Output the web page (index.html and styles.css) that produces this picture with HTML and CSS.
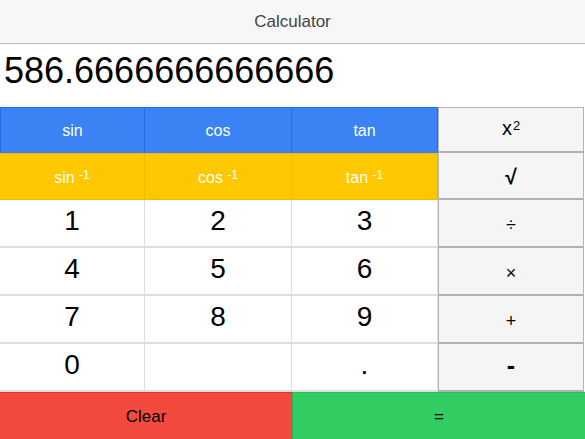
FILE: index.html
```html
<!DOCTYPE html>
<html>
<head>
<meta charset="utf-8">
<link rel="stylesheet" href="styles.css">
</head>
<body>
<div class="app">
  <header class="title">Calculator</header>
  <div class="display">586.6666666666666</div>
  <div class="keys">
    <div class="key trig">sin</div>
    <div class="key trig">cos</div>
    <div class="key trig">tan</div>
    <div class="key op op-sq">x<sup>2</sup></div>

    <div class="key inv">sin&nbsp;<sup>-1</sup></div>
    <div class="key inv">cos&nbsp;<sup>-1</sup></div>
    <div class="key inv">tan&nbsp;<sup>-1</sup></div>
    <div class="key op op-sqrt">√</div>

    <div class="key num">1</div>
    <div class="key num">2</div>
    <div class="key num">3</div>
    <div class="key op op-small">÷</div>

    <div class="key num">4</div>
    <div class="key num">5</div>
    <div class="key num">6</div>
    <div class="key op op-small">×</div>

    <div class="key num">7</div>
    <div class="key num">8</div>
    <div class="key num">9</div>
    <div class="key op op-small">+</div>

    <div class="key num">0</div>
    <div class="key num"></div>
    <div class="key num">.</div>
    <div class="key op op-minus">-</div>
  </div>
  <div class="bottom">
    <div class="key clear">Clear</div>
    <div class="key equals">=</div>
  </div>
</div>
</body>
</html>
```
FILE: styles.css
```css
* { box-sizing: border-box; }
html, body {
  margin: 0;
  padding: 0;
  background: #ffffff;
}
body {
  font-family: "Liberation Sans", Arial, sans-serif;
  width: 585px;
  height: 439px;
  overflow: hidden;
}
.app {
  display: flex;
  flex-direction: column;
  width: 585px;
}
.title {
  height: 44px;
  background: #f7f7f7;
  border-bottom: 1px solid #b9b9b9;
  color: #444;
  font-size: 17px;
  display: flex;
  align-items: center;
  justify-content: center;
  padding-top: 1px;
}
.display {
  height: 63px;
  font-size: 36px;
  color: #000;
  padding-left: 4px;
  display: flex;
  align-items: center;
  padding-bottom: 9px;
}
.keys {
  display: grid;
  grid-template-columns: 145px 147px 146px 147px;
  grid-template-rows: 46px 47px 48px 48px 48px 48px;
}
.key {
  display: flex;
  align-items: center;
  justify-content: center;
}
.key sup {
  font-size: 12px;
  position: relative;
  top: -3px;
}
.trig {
  background: #3b82f5;
  color: #fff;
  font-size: 16px;
  border: 1px solid #1f6fea;
  border-left: none;
  border-bottom: none;
}
.trig:first-child { border-left: 1px solid #1f6fea; }
.inv {
  background: #fec800;
  color: #fff;
  font-size: 16px;
  border-right: 1px solid #ecba00;
  border-top: 1px solid #ecba00;
  border-bottom: 1px solid #ecba00;
  padding-top: 2px;
}
.num {
  background: #fff;
  color: #000;
  font-size: 28px;
  border-right: 1px solid #dddddd;
  border-bottom: 2px solid #dddddd;
  padding-bottom: 4px;
}
.op {
  background: #f5f5f5;
  color: #000;
  border: 1px solid #b3b3b3;
  margin-right: 1px;
  border-bottom-width: 2px;
  border-top: none;
}
.op-sq {
  border-top: 1px solid #b3b3b3;
  font-size: 20px;
  padding-bottom: 2px;
}
.op-sq sup { font-size: 13px; margin-left: 1px; top: -3px; }
.op-sqrt { font-size: 21px; font-weight: bold; padding-top: 2px; }
.op-small { font-size: 18px; padding-top: 4px; }
.op-minus { font-size: 25px; font-weight: bold; padding-bottom: 3px; }
.bottom {
  display: grid;
  grid-template-columns: 292px 293px;
  height: 47px;
}
.clear {
  background: #f44a3e;
  border-top: 1px solid #e0302a;
  color: #000;
  font-size: 17px;
  padding-top: 2px;
}
.equals {
  background: #33cc62;
  border-top: 1px solid #2bbf55;
  border-left: 1px solid #28b04e;
  color: #000;
  font-size: 17px;
  padding-top: 2px;
}
```
